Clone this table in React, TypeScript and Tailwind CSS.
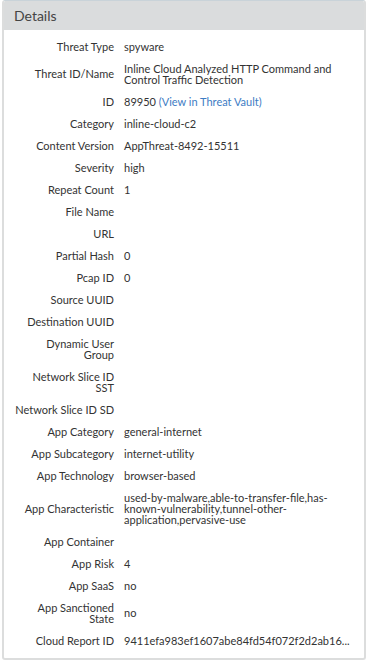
type Row = { label: string; value?: React.ReactNode };

const rows: Row[] = [
  { label: "Threat Type", value: "spyware" },
  { label: "Threat ID/Name", value: "Inline Cloud Analyzed HTTP Command and Control Traffic Detection" },
  {
    label: "ID",
    value: (
      <>
        89950 <a href="#" className="text-[#3d7cc4]">(View in Threat Vault)</a>
      </>
    ),
  },
  { label: "Category", value: "inline-cloud-c2" },
  { label: "Content Version", value: "AppThreat-8492-15511" },
  { label: "Severity", value: "high" },
  { label: "Repeat Count", value: "1" },
  { label: "File Name" },
  { label: "URL" },
  { label: "Partial Hash", value: "0" },
  { label: "Pcap ID", value: "0" },
  { label: "Source UUID" },
  { label: "Destination UUID" },
  { label: "Dynamic User Group" },
  { label: "Network Slice ID SST" },
  { label: "Network Slice ID SD" },
  { label: "App Category", value: "general-internet" },
  { label: "App Subcategory", value: "internet-utility" },
  { label: "App Technology", value: "browser-based" },
  {
    label: "App Characteristic",
    value: "used-by-malware,able-to-transfer-file,has-known-vulnerability,tunnel-other-application,pervasive-use",
  },
  { label: "App Container" },
  { label: "App Risk", value: "4" },
  { label: "App SaaS", value: "no" },
  { label: "App Sanctioned State", value: "no" },
  {
    label: "Cloud Report ID",
    value: <span className="whitespace-nowrap">9411efa983ef1607abe84fd54f072f2d2ab16...</span>,
  },
];

export default function App() {
  return (
    <div className="w-[368px] h-[662px] bg-white px-[2px] pb-[2px] font-['Lato','Liberation_Sans',sans-serif]">
      <div className="h-full border-2 border-t border-[#dcdddd] border-t-[#c9d3d9] rounded-[3px] overflow-hidden flex flex-col">
        {/* Panel header */}
        <div className="h-[29px] shrink-0 bg-[#dadcdd] flex items-center px-[10px] text-[14px] text-[#444]">
          Details
        </div>

        {/* Field list */}
        <div className="pt-[5px] text-[11px] leading-[11px] text-[#333]">
          {rows.map((r) => (
            <div key={r.label} className="flex items-center">
              <div className="w-[110px] shrink-0 pl-[10px] py-[5.5px] text-right">{r.label}</div>
              <div className="w-[226px] pl-[10px] py-[5.5px]">{r.value}</div>
            </div>
          ))}
        </div>
      </div>
    </div>
  );
}
